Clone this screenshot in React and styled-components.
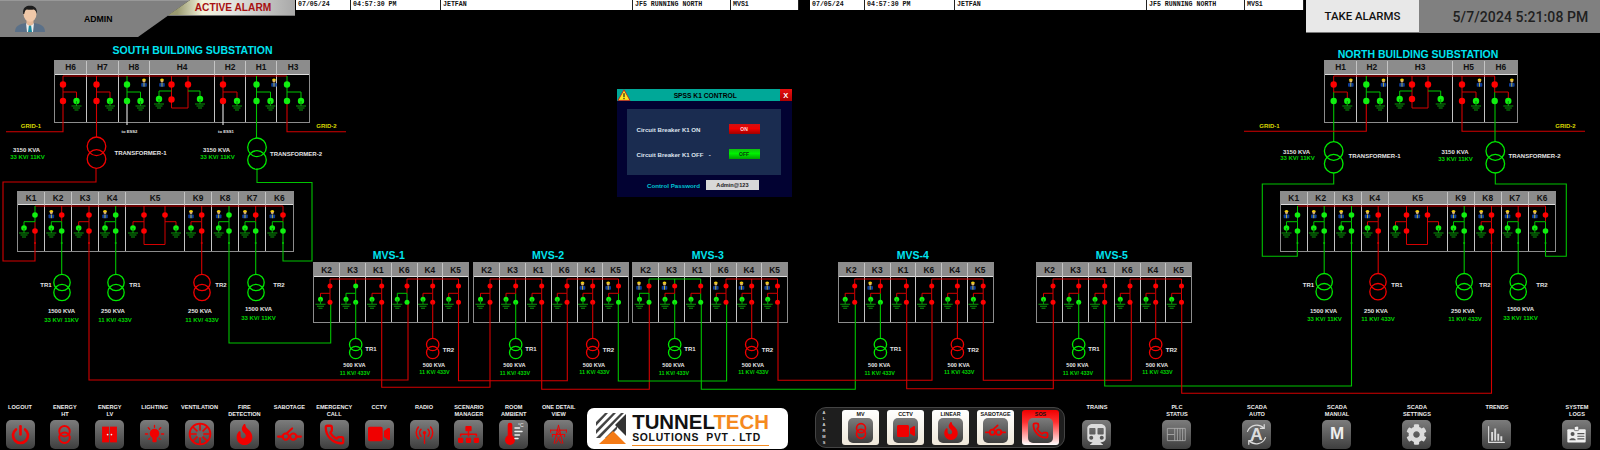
import React from "react";
import styled, { createGlobalStyle } from "styled-components";
import { FaFire, FaVideo, FaSitemap, FaCog, FaSubway } from "react-icons/fa";
import { Phone } from "lucide-react";

const RED = "#f00000";
const GREEN = "#00e800";
const WIRE_RED = "#d40000";
const WIRE_GREEN = "#00c400";
const CANVAS_TOP = 37;

const wireOf = (c) => (c === "g" ? WIRE_GREEN : WIRE_RED);

/* breaker rows, in page coordinates */
const HT = { bus: 76, top: 84.5, bottom: 101, branch: 92, earth: 101, r: 3.2, personDx: 3.5, personY: 82 };
const KP = { bus: 206, top: 215, bottom: 231, branch: 221.7, earth: 228, r: 2.8, personDx: 0, personY: 213.5, tick: 243 };
const MV = { bus: 279, top: 286, bottom: 302.3, branch: 293.3, earth: 299.3, r: 2.5, personDx: -0.5, personY: 285 };

const SOUTH_HT_COLS = [["H6", 32], ["H7", 31.5], ["H8", 31.5], ["H4", 65], ["H2", 31], ["H1", 31], ["H3", 32]];
const NORTH_HT_COLS = [["H1", 31.4], ["H2", 31.3], ["H3", 65], ["H5", 32], ["H6", 31.7]];
const K_COLS = [["K1", 27], ["K2", 27], ["K3", 27], ["K4", 27], ["K5", 59], ["K9", 27], ["K8", 27], ["K7", 27], ["K6", 26.7]];
const MVS_COLS = [["K2", 26], ["K3", 26], ["K1", 25.7], ["K6", 26], ["K4", 25.3], ["K5", 25]];

const SOUTH_HT = [
  [63, 76.5, "rrr"], [96.5, 110, "rrr"], [127, 140.5, "gggp"],
  [223, 237, "rrr"], [256.5, 270.5, "gggp"], [287, 301, "ggg"],
];
const NORTH_HT = [
  [1333.7, 1347.3, "rgrp"], [1366.3, 1380, "gggp"], [1462, 1476, "rrrp"], [1494.7, 1508.3, "rgrp"],
];
const K_POS = [[35, 24], [61.7, 51.3], [89, 78.7], [115.7, 105], [201.7, 191], [229, 218.7], [255.7, 245], [283, 272.3]];
const SOUTH_K = ["grg", "rggp", "rrr", "gggp", "rrrp", "gggp", "rggp", "rggp"];
const NORTH_K = ["gggp", "gggp", "gggp", "rrrp", "gggp", "rrrp", "rggp", "rggp"];

const MVS = [
  { name: "MVS-1", x: 314, cx: 388.7, cells: ["rrr", "ggg", "rrr", "rgg", "rrr", "rrr"], left: "r" },
  { name: "MVS-2", x: 474, cx: 548, cells: ["rrr", "rgr", "rrr", "rrr", "rrrp", "rgrp"], left: "r" },
  { name: "MVS-3", x: 633, cx: 707.7, cells: ["rggp", "rgrp", "rgr", "rrrp", "rrrp", "rrrp"], left: "g" },
  { name: "MVS-4", x: 838.7, cx: 912.7, cells: ["rrr", "rgrp", "rrr", "rrr", "rrr", "rrrp"], left: "r" },
  { name: "MVS-5", x: 1037, cx: 1111.7, cells: ["rrr", "rgr", "rrr", "rrr", "rrr", "rrr"], left: "r" },
];
const MVS_MAIN = [16, 41.7, 67.7, 93, 118.7, 144.5];
const MVS_EARTH = [6.5, 32, 58, 83.3, 109, 134.7];

const WIRES = [
  // south HT
  [WIRE_RED, "M63 101V131.7H6"],
  [WIRE_RED, "M96.5 101V137"],
  ["#e8e8e8", "M127 101V125"],
  ["#e8e8e8", "M223 101V125"],
  [WIRE_GREEN, "M256.5 101V138"],
  [WIRE_RED, "M287 101V131.7H346"],
  [WIRE_RED, "M96 168.3V182H3V261H35V231"],
  [WIRE_GREEN, "M257 168.3V182.5H312V261H283V231"],
  // south K
  [WIRE_GREEN, "M61.7 231V274.3"],
  [WIRE_RED, "M89 231V380H408V302.3"],
  [WIRE_GREEN, "M115.7 231V274.3"],
  [WIRE_RED, "M201.7 231V274.3"],
  [WIRE_GREEN, "M229 231V343H330.7V302.3"],
  [WIRE_GREEN, "M255.7 231V274.3"],
  // MVS ties
  [WIRE_RED, "M381.7 302V387.3H490V302"],
  [WIRE_RED, "M458.5 302V380.7H567.3V302"],
  [WIRE_RED, "M541.7 302V389.3H649.3V302"],
  [WIRE_GREEN, "M618.3 302V381H726.6V302"],
  [WIRE_GREEN, "M701.3 302V389.3H855.3V302"],
  [WIRE_RED, "M778 302V380.3H932V302"],
  [WIRE_RED, "M906.7 302V388.7H1053.3V302"],
  [WIRE_RED, "M983.3 302V380.3H1131.3V302"],
  // north HT
  [WIRE_GREEN, "M1333.7 101V141.7"],
  [WIRE_RED, "M1366.3 101V131.3H1244"],
  [WIRE_RED, "M1462 101V131.3H1585"],
  [WIRE_GREEN, "M1495 101V141.7"],
  [WIRE_GREEN, "M1333.7 173V184H1262.3V256.3H1297.3V231"],
  [WIRE_GREEN, "M1495.3 173V184H1566.3V256.3H1545.5V231"],
  // north K
  [WIRE_GREEN, "M1324.2 231V273.5"],
  [WIRE_GREEN, "M1351.5 231V386H1104.7V302.3"],
  [WIRE_RED, "M1378.2 231V273.5"],
  [WIRE_GREEN, "M1464.2 231V273.5"],
  [WIRE_RED, "M1491.5 231V393.3H1181.7V302.3"],
  [WIRE_GREEN, "M1518.2 231V273.5"],
];

const TRANSFORMERS = [
  [96.5, 137, 9.3, 12.7, RED], [257, 138, 9.3, 12.7, GREEN],
  [1333.7, 141.7, 9.3, 12.7, GREEN], [1495.3, 141.7, 9.3, 12.7, GREEN],
  [62, 274.3, 8.2, 10, GREEN], [116, 274.3, 8.2, 10, GREEN], [202, 274.3, 8.2, 10, RED], [256, 274.3, 8.2, 10, GREEN],
  [1324.2, 273.5, 8.2, 10, GREEN], [1378, 273.5, 8.2, 10, RED], [1464.2, 273.5, 8.2, 10, GREEN], [1518.2, 273.5, 8.2, 10, GREEN],
];

/* [text, center x, center y, colour kind] */
const LABELS = [
  ["GRID-1", 31, 126, "y"], ["GRID-2", 326.5, 126, "y"], ["GRID-1", 1269.5, 125.7, "y"], ["GRID-2", 1565.5, 125.7, "y"],
  ["3150 KVA", 26.5, 149.5], ["33 KV/ 11KV", 27.5, 156.5, "g"], ["TRANSFORMER-1", 140.5, 152.5],
  ["3150 KVA", 216.5, 149.5], ["33 KV/ 11KV", 217.5, 157.3, "g"], ["TRANSFORMER-2", 296, 153.7],
  ["3150 KVA", 1296.5, 151.5], ["33 KV/ 11KV", 1297.5, 158.3, "g"], ["TRANSFORMER-1", 1374.5, 156],
  ["3150 KVA", 1455, 151.5], ["33 KV/ 11KV", 1455.5, 159, "g"], ["TRANSFORMER-2", 1534.5, 156],
  ["TR1", 46, 285], ["TR1", 135, 285], ["TR2", 221, 285], ["TR2", 279, 285],
  ["1500 KVA", 61.5, 311], ["33 KV/ 11KV", 61.5, 319.5, "g"],
  ["250 KVA", 113, 311], ["11 KV/ 433V", 115, 319.5, "g"],
  ["250 KVA", 200, 311], ["11 KV/ 433V", 202, 319.5, "g"],
  ["1500 KVA", 258.5, 309], ["33 KV/ 11KV", 258.5, 318, "g"],
  ["TR1", 1308.5, 285], ["TR1", 1397, 285], ["TR2", 1485, 285], ["TR2", 1542, 285],
  ["1500 KVA", 1323.5, 310.7], ["33 KV/ 11KV", 1324.5, 319, "g"],
  ["250 KVA", 1376, 310.7], ["11 KV/ 433V", 1378, 319, "g"],
  ["250 KVA", 1463, 311], ["11 KV/ 433V", 1465, 319, "g"],
  ["1500 KVA", 1520.5, 308.7], ["33 KV/ 11KV", 1520.5, 317.5, "g"],
];

const Global = createGlobalStyle`
  html, body { margin: 0; padding: 0; background: #000; }
  body { overflow: hidden; font-family: "Liberation Sans", Arial, sans-serif; }
`;

const Page = styled.div`
  width: 1600px;
  height: 450px;
  display: flex;
  flex-direction: column;
  background: #000;
  overflow: hidden;
`;

/* top bar */
const TopBar = styled.div`
  height: ${CANVAS_TOP}px;
  flex: none;
  display: flex;
  align-items: flex-start;
`;

const AdminBlock = styled.div`
  width: 190px;
  height: 37px;
  flex: none;
  display: flex;
  align-items: center;
  padding-left: 14px;
  box-sizing: border-box;
  background: linear-gradient(#b0b0b0 0, #808080 1px);
  clip-path: polygon(0 0, 100% 0, 138px 100%, 0 100%);
`;

const AdminName = styled.span`
  margin-left: 38px;
  color: #000;
  font-size: 8.7px;
  font-weight: 700;
`;

const AlarmBanner = styled.div`
  width: 128px;
  height: 16px;
  margin-left: -23px;
  flex: none;
  padding-left: 4px;
  box-sizing: border-box;
  display: flex;
  align-items: center;
  justify-content: center;
  background: linear-gradient(90deg, #9a9a70 8%, #f4f4dc 28%, #e4e4e0 50%, #a8a8a8 100%);
  border-bottom: 1px solid #777;
  clip-path: polygon(23px 0, 100% 0, 100% 100%, 0 100%);
  color: #a81010;
  font-size: 10.2px;
  font-weight: 700;
`;

const AlarmRow = styled.div`
  width: ${(p) => p.$w}px;
  margin-left: ${(p) => p.$ml}px;
  height: 10px;
  flex: none;
  display: flex;
  background: #fff;
  color: #111;
  font-family: "Liberation Mono", monospace;
  font-size: 6.6px;
  font-weight: 700;
  line-height: 9px;
`;

const AlarmCell = styled.div`
  flex: ${(p) => (p.$w ? `0 0 ${p.$w}px` : 1)};
  padding-left: 2px;
  box-sizing: border-box;
  border-right: 1px solid #222;
  white-space: nowrap;
`;

const TakeAlarms = styled.button`
  margin-left: 2px;
  width: 113px;
  height: 33px;
  flex: none;
  padding: 0;
  border: none;
  border-bottom: 1px solid #777;
  background: #e8e8e8;
  color: #111;
  font-family: "Roboto", sans-serif;
  font-weight: 500;
  font-size: 11.4px;
`;

const Clock = styled.div`
  flex: 1;
  height: 33px;
  display: flex;
  align-items: center;
  justify-content: center;
  padding-left: 22px;
  background: #808080;
  color: #202020;
  font-family: "Roboto", sans-serif;
  font-weight: 500;
  font-size: 14px;
  letter-spacing: 0.1px;
`;

/* diagram canvas */
const Canvas = styled.div`
  flex: 1;
  position: relative;
`;

const Wiring = styled.svg`
  position: absolute;
  inset: 0;
  z-index: 1;
`;

const Panel = styled.div`
  position: absolute;
  left: ${(p) => p.$x}px;
  top: ${(p) => p.$y - CANVAS_TOP}px;
  height: ${(p) => p.$h}px;
  display: flex;
  box-sizing: content-box;
  outline: 1px solid #8c8c8c;
`;

const Cell = styled.div`
  flex: 0 0 ${(p) => p.$w}px;
  display: flex;
  flex-direction: column;
  box-sizing: border-box;
  border-right: 1.5px solid #c4c4c4;
  &:last-child { border-right: none; }
`;

const CellHead = styled.div`
  height: ${(p) => p.$h}px;
  flex: none;
  display: flex;
  align-items: center;
  justify-content: center;
  background: #8c8c8c;
  border-bottom: 1.5px solid #dedede;
  box-sizing: border-box;
  color: #111;
  font-size: 8.4px;
  font-weight: 700;
`;

const Title = styled.div`
  position: absolute;
  left: ${(p) => p.$x}px;
  top: ${(p) => p.$y - CANVAS_TOP}px;
  transform: translate(-50%, -50%);
  color: #00e4f0;
  font-size: 10.5px;
  font-weight: 700;
  white-space: nowrap;
  z-index: 2;
`;

const Tag = styled.div`
  position: absolute;
  left: ${(p) => p.$x}px;
  top: ${(p) => p.$y - CANVAS_TOP}px;
  transform: translate(-50%, -50%);
  color: ${(p) => (p.$kind === "g" ? "#00d800" : p.$kind === "y" ? "#d8d800" : "#e4e4e4")};
  font-size: ${(p) => p.$size || 6}px;
  font-weight: 700;
  white-space: nowrap;
  z-index: 2;
`;

/* control popup */
const Dialog = styled.div`
  position: absolute;
  left: 617px;
  top: 52px;
  width: 175px;
  height: 108px;
  display: flex;
  flex-direction: column;
  background: #020232;
  z-index: 3;
`;

const DialogBar = styled.div`
  height: 12px;
  flex: none;
  display: flex;
  align-items: center;
  background: #00a898;
`;

const DialogTitle = styled.div`
  flex: 1;
  text-align: center;
  color: #000;
  font-size: 6.7px;
  font-weight: 700;
`;

const CloseButton = styled.div`
  width: 12.5px;
  height: 12px;
  display: flex;
  align-items: center;
  justify-content: center;
  background: linear-gradient(#e81010, #b00000);
  color: #fff;
  font-size: 7.5px;
  font-weight: 700;
`;

const DialogBody = styled.div`
  margin: 7.5px 11.5px 0 9.5px;
  height: 66px;
  flex: none;
  display: flex;
  flex-direction: column;
  justify-content: center;
  gap: 15px;
  padding: 0 21px 0 10px;
  box-sizing: border-box;
  background: #1a2c50;
`;

const BreakerRow = styled.div`
  display: flex;
  align-items: center;
  justify-content: space-between;
  color: #dfe4ee;
  font-size: 6.1px;
  font-weight: 700;
`;

const BreakerButton = styled.div`
  width: 31px;
  height: 10px;
  display: flex;
  align-items: center;
  justify-content: center;
  background: ${(p) =>
    p.$on
      ? "linear-gradient(#d01010, #f00000 45%, #a00000)"
      : "linear-gradient(#10c010, #00f000 45%, #00a000)"};
  color: ${(p) => (p.$on ? "#ffd8d8" : "#0a3a0a")};
  font-size: 5px;
  font-weight: 700;
`;

const PasswordRow = styled.div`
  margin-top: 5.5px;
  padding-left: 30px;
  display: flex;
  align-items: center;
  gap: 6px;
  color: #00c4d4;
  font-size: 6.2px;
  font-weight: 700;
`;

const PasswordBox = styled.div`
  width: 53px;
  height: 10px;
  display: flex;
  align-items: center;
  justify-content: center;
  background: #d8d8d8;
  color: #222;
  font-size: 5.6px;
  font-weight: 700;
`;

/* bottom bar */
const BottomBar = styled.div`
  height: 47px;
  flex: none;
  display: flex;
  align-items: flex-start;
`;

const NavGroup = styled.div`
  display: flex;
  gap: ${(p) => p.$gap}px;
  margin-left: ${(p) => p.$ml || 0}px;
  flex: none;
`;

const NavItem = styled.div`
  width: ${(p) => p.$w}px;
  display: flex;
  flex-direction: column;
  align-items: center;
  padding-top: 1px;
`;

const NavLabel = styled.div`
  height: 15.7px;
  color: #eee;
  font-size: 5.6px;
  font-weight: 700;
  line-height: 7px;
  text-align: center;
  white-space: nowrap;
`;

const IconButton = styled.div`
  width: ${(p) => p.$size || 29}px;
  height: ${(p) => p.$size || 29}px;
  flex: none;
  display: flex;
  align-items: center;
  justify-content: center;
  border-radius: 5px;
  background: linear-gradient(#7c7c7c, #3e3e3e);
  color: ${(p) => (p.$light ? "#dcdcdc" : "#f00000")};
`;

const LetterIcon = styled.span`
  color: #eee;
  font-size: 17px;
  font-weight: 700;
`;

const LogoCard = styled.div`
  margin: 4.7px 0 0 8.5px;
  width: 200.5px;
  height: 41.7px;
  flex: none;
  display: flex;
  align-items: center;
  gap: 6px;
  padding-left: 9px;
  box-sizing: border-box;
  background: #fff;
  border-radius: 7px;
`;

const LogoText = styled.div`
  display: flex;
  flex-direction: column;
  color: #111;
  font-weight: 700;
`;

const LogoName = styled.div`
  font-size: 20.4px;
  line-height: 20px;
`;

const LogoAccent = styled.span`
  color: #f58a1f;
`;

const LogoSub = styled.div`
  font-size: 10.4px;
  line-height: 12px;
  letter-spacing: 0.7px;
  white-space: pre;
  border-bottom: 1px solid #f58a1f;
  padding-bottom: 1px;
`;

const AlarmGroup = styled.div`
  margin: 4px 0 0 27.3px;
  width: 250px;
  height: 41px;
  flex: none;
  display: flex;
  align-items: center;
  gap: 8.2px;
  padding-left: 5px;
  box-sizing: border-box;
  background: #1e1e1e;
  border: 1px solid #444;
  border-radius: 11px;
`;

const VerticalWord = styled.div`
  width: 6px;
  margin-right: 7px;
  color: #ddd;
  font-size: 4px;
  font-weight: 700;
  line-height: 6px;
  text-align: center;
`;

const AlarmCard = styled.div`
  width: 36.8px;
  height: 35.5px;
  display: flex;
  flex-direction: column;
  align-items: center;
  justify-content: space-between;
  padding: 1.5px 0 2px;
  box-sizing: border-box;
  border-radius: 3px;
  background: ${(p) =>
    p.$hot ? "linear-gradient(#f00000, #ff3030 35%, #fff 100%)" : "linear-gradient(#fff, #efe8da)"};
`;

const CardLabel = styled.div`
  color: #111;
  font-size: 5.4px;
  font-weight: 700;
  white-space: nowrap;
`;

/* drawings */
function Person({ x, y }) {
  return (
    <g>
      <rect x={x - 2.8} y={y + 0.9} width={5.6} height={3.8} rx={0.8} fill="#0c3c98" />
      <rect x={x - 0.4} y={y + 0.9} width={0.8} height={3.8} fill="#d8c830" />
      <circle cx={x} cy={y - 0.9} r={1.5} fill="#d8b078" />
      <path d={`M${x - 2} ${y - 1.4}a2 2 0 0 1 4 0z`} fill="#f0d010" />
    </g>
  );
}

function Ground({ x, y }) {
  const s = y + 5;
  return (
    <path
      d={`M${x} ${y}V${s}M${x - 5} ${s}H${x + 5}M${x - 3.5} ${s + 2}H${x + 3.5}M${x - 2} ${s + 4}H${x + 2}`}
      stroke="#089808"
      strokeWidth="1.1"
      fill="none"
    />
  );
}

function Dot({ x, y, r, c }) {
  return <circle cx={x} cy={y} r={r} fill={c === "g" ? "#10f010" : "#ff0000"} />;
}

function Feeder({ main, earth, status, geo }) {
  const [top, bottom, branch, person] = status;
  return (
    <g fill="none" strokeWidth="1">
      <path d={`M${main} ${geo.top}V${geo.branch}`} stroke={wireOf(top)} />
      <path d={`M${main} ${geo.branch}V${geo.bottom}`} stroke={wireOf(bottom)} />
      <path d={`M${main} ${geo.branch}H${earth}V${geo.earth}`} stroke={wireOf(branch)} />
      <Dot x={main} y={geo.top} r={geo.r} c={top} />
      <Dot x={main} y={geo.bottom} r={geo.r} c={bottom} />
      <Dot x={earth} y={geo.earth} r={geo.r} c="g" />
      <Ground x={earth} y={geo.earth} />
      {geo.tick && <circle cx={main} cy={geo.tick} r={1} fill={wireOf(bottom)} />}
      {person && <Person x={earth + geo.personDx} y={geo.personY} />}
    </g>
  );
}

function Coupler({ left, right, earthLeft, earthRight, branch, bottom, loop, branchY, earthY, geo }) {
  const stroke = wireOf(branch);
  return (
    <g fill="none" strokeWidth="1">
      <path d={`M${left} ${geo.bus}V${bottom}M${right} ${geo.bus}V${loop}H${left}V${bottom}`} stroke={WIRE_RED} />
      <path d={`M${left} ${branchY}H${earthLeft}V${earthY}M${right} ${branchY}H${earthRight}V${earthY}`} stroke={stroke} />
      <Dot x={left} y={geo.top} r={geo.r} c="r" />
      <Dot x={left} y={bottom} r={geo.r} c="r" />
      <Dot x={right} y={geo.top} r={geo.r} c="r" />
      <Dot x={earthLeft} y={earthY} r={geo.r} c="g" />
      <Dot x={earthRight} y={earthY} r={geo.r} c="g" />
      <Ground x={earthLeft} y={earthY} />
      <Ground x={earthRight} y={earthY} />
    </g>
  );
}

function Transformer({ x, top, r, gap, color }) {
  return (
    <g fill="none" stroke={color} strokeWidth="1.3">
      <circle cx={x} cy={top + r} r={r} />
      <circle cx={x} cy={top + r + gap} r={r} />
    </g>
  );
}

function WarningIcon() {
  return (
    <svg width="14" height="12" viewBox="0 0 14 12">
      <path d="M7 .8L13 11.4H1z" fill="#ffe820" stroke="#c02020" strokeWidth="0.9" />
      <rect x="6.4" y="4.2" width="1.2" height="4" fill="#222" />
      <rect x="6.4" y="9" width="1.2" height="1.2" fill="#222" />
    </svg>
  );
}

function Svg({ size = 21, children }) {
  return (
    <svg width={size} height={size} viewBox="0 0 24 24" fill="none" stroke="currentColor" strokeLinecap="round" strokeLinejoin="round">
      {children}
    </svg>
  );
}

const PowerIcon = ({ size }) => (
  <Svg size={size}>
    <path d="M12 2.5V12" strokeWidth="3" />
    <path d="M6.8 6.2a8.6 8.6 0 1 0 10.4 0" strokeWidth="3" />
  </Svg>
);
const CoilsIcon = ({ size }) => (
  <Svg size={size}>
    <circle cx="12" cy="8.2" r="6" strokeWidth="2.2" />
    <circle cx="12" cy="15.8" r="6" strokeWidth="2.2" />
  </Svg>
);
const DoorsIcon = ({ size }) => (
  <Svg size={size}>
    <rect x="3.5" y="3" width="8" height="18" fill="currentColor" stroke="none" />
    <rect x="12.5" y="3" width="8" height="18" fill="currentColor" stroke="none" />
    <circle cx="9.8" cy="12" r="1" fill="#eee" stroke="none" />
    <circle cx="14.2" cy="12" r="1" fill="#eee" stroke="none" />
  </Svg>
);
const BulbIcon = ({ size }) => (
  <Svg size={size}>
    <circle cx="12" cy="11" r="5" fill="currentColor" stroke="none" />
    <rect x="9.8" y="15" width="4.4" height="5" rx="1" fill="currentColor" stroke="none" />
    <path d="M12 2.5v2M5.5 5l1.5 1.5M18.5 5L17 6.5M2.5 11.5h2.2M19.3 11.5h2.2M6 17l1.3-1.2M18 17l-1.3-1.2" strokeWidth="1.4" />
  </Svg>
);
const FanIcon = ({ size }) => (
  <Svg size={size}>
    <circle cx="12" cy="12" r="10.4" strokeWidth="1.8" />
    <path d="M12 2v20M2 12h20M5 5l14 14M19 5L5 19" strokeWidth="1.7" />
    <circle cx="12" cy="12" r="3.4" fill="#666" stroke="none" />
  </Svg>
);
const SwitchIcon = ({ size }) => (
  <Svg size={size}>
    <path d="M1 14h4.4M18.6 14H23M9.5 10.8l5-4.6" strokeWidth="2" />
    <circle cx="8.4" cy="14" r="3" strokeWidth="2" />
    <circle cx="15.6" cy="14" r="3" strokeWidth="2" />
  </Svg>
);
const RadioIcon = ({ size }) => (
  <Svg size={size}>
    <circle cx="12" cy="10" r="2" fill="currentColor" stroke="none" />
    <path d="M12 11v11" strokeWidth="1.5" />
    <path d="M8 6a6 6 0 0 0 0 8M16 6a6 6 0 0 1 0 8" strokeWidth="1.7" />
    <path d="M5 3.5a10 10 0 0 0 0 13M19 3.5a10 10 0 0 1 0 13" strokeWidth="1.7" />
  </Svg>
);
const ThermoIcon = ({ size }) => (
  <Svg size={size}>
    <path d="M8 3v12.5" stroke="#f00000" strokeWidth="4.6" />
    <circle cx="8" cy="18" r="5" fill="#f00000" stroke="none" />
    <path d="M13 6h4.5M13 9.5h7M13 13h4.5M13 16.5h3" stroke="#eee" strokeWidth="1.5" />
    <text x="16" y="4.5" fontSize="5" fill="#eee" stroke="none" fontFamily="Liberation Sans">°C</text>
  </Svg>
);
const TowerIcon = ({ size }) => (
  <Svg size={size}>
    <path d="M12 1.5L7 22M12 1.5L17 22M3 7h18M5 12h14M10 7l4 5M14 7l-4 5M9 12l6 10M15 12L9 22M3 7v2.5M21 7v2.5M5 12v2.5M19 12v2.5" strokeWidth="1.1" />
  </Svg>
);
const PlcIcon = ({ size }) => (
  <Svg size={size}>
    <rect x="2" y="5" width="20" height="14" stroke="#aaa" strokeWidth="1" />
    <path d="M2 12h7M10 5v14M13 5v14M16 5v14M19 5v14" stroke="#aaa" strokeWidth="1" />
  </Svg>
);
const AutoIcon = ({ size }) => (
  <Svg size={size}>
    <path d="M3.4 9a9.4 9.4 0 0 1 15.6-3M20.6 15a9.4 9.4 0 0 1-15.6 3" strokeWidth="1.2" />
    <path d="M19.4 2.6V6.2h-3.6M4.6 21.4V17.8h3.6" strokeWidth="1.2" />
    <text x="12" y="17.6" textAnchor="middle" fontSize="16.5" fill="currentColor" stroke="none" fontWeight="700" fontFamily="Liberation Sans, sans-serif">A</text>
  </Svg>
);
const TrendsIcon = ({ size }) => (
  <Svg size={size}>
    <path d="M3 3v18h18" strokeWidth="1.2" />
    <path d="M7 9v10M10.5 5v14M14 11v8M17.5 14v5" strokeWidth="2.2" strokeLinecap="butt" />
  </Svg>
);
const LogsIcon = ({ size }) => (
  <Svg size={size}>
    <rect x="1.5" y="6" width="21" height="15" rx="1" fill="#eee" stroke="none" />
    <rect x="9.5" y="2.5" width="5" height="5" rx="1" fill="#eee" stroke="#555" strokeWidth="0.8" />
    <circle cx="7.5" cy="11.5" r="2.3" fill="#555" stroke="none" />
    <path d="M3.8 18.5c.4-3 7-3 7.4 0z" fill="#555" stroke="none" />
    <path d="M13.5 11h7M13.5 14h7M13.5 17h7" stroke="#555" strokeWidth="1.3" />
  </Svg>
);
const FlameIcon = ({ size = 21 }) => <FaFire size={size} />;
const VideoIcon = ({ size = 21 }) => <FaVideo size={size + 1} />;
const HandsetIcon = ({ size = 21 }) => <Phone size={size} strokeWidth={2.6} />;

function LogoMark() {
  return (
    <svg width="30" height="31" viewBox="0 0 30 31" style={{ flex: "none" }}>
      <path d="M0 9L9 0h3L0 13zM0 17L17 0h3L0 21zM0 25L25 0h3L4 25zM9 25L21 13v3L12 25z" fill="#444" />
      <path d="M30 1V23L19 12z" fill="#333" />
      <path d="M3 31L17 18 30 31z" fill="#f47b16" />
    </svg>
  );
}

const LEFT_NAV = [
  ["LOGOUT", <PowerIcon />],
  ["ENERGY\nHT", <CoilsIcon />],
  ["ENERGY\nLV", <DoorsIcon />],
  ["LIGHTING", <BulbIcon size={23} />],
  ["VENTILATION", <FanIcon size={24} />],
  ["FIRE\nDETECTION", <FlameIcon />],
  ["SABOTAGE", <SwitchIcon size={25} />],
  ["EMERGENCY\nCALL", <HandsetIcon />],
  ["CCTV", <VideoIcon />],
  ["RADIO", <RadioIcon />],
  ["SCENARIO\nMANAGER", <FaSitemap size={21} />],
  ["ROOM\nAMBIENT", <ThermoIcon size={24} />],
  ["ONE DETAIL\nVIEW", <TowerIcon />],
];

const RIGHT_NAV = [
  ["TRAINS", <FaSubway size={21} />],
  ["PLC\nSTATUS", <PlcIcon />],
  ["SCADA\nAUTO", <AutoIcon size={25} />],
  ["SCADA\nMANUAL", <LetterIcon>M</LetterIcon>],
  ["SCADA\nSETTINGS", <FaCog size={21} />],
  ["TRENDS", <TrendsIcon />],
  ["SYSTEM\nLOGS", <LogsIcon />],
];

const ALARM_CARDS = [
  ["MV", <CoilsIcon size={18} />],
  ["CCTV", <VideoIcon size={17} />],
  ["LINEAR", <FlameIcon size={18} />],
  ["SABOTAGE", <SwitchIcon size={21} />],
  ["SOS", <HandsetIcon size={17} />, true],
];

const ALARM_ROWS = [
  { ml: 1, w: 503, cells: ["07/05/24", "04:57:30 PM", "JETFAN", "JF5 RUNNING NORTH", "MVS1"] },
  { ml: 11, w: 494, cells: ["07/05/24", "04:57:30 PM", "JETFAN", "JF5 RUNNING NORTH", "MVS1"] },
];
const ALARM_WIDTHS = [55, 90, 192, 98];

function MultiLine({ text }) {
  return text.split("\n").map((line) => <div key={line}>{line}</div>);
}

function Nav({ items, gap, ml, width, light }) {
  return (
    <NavGroup $gap={gap} $ml={ml}>
      {items.map(([label, icon]) => (
        <NavItem key={label} $w={width}>
          <NavLabel><MultiLine text={label} /></NavLabel>
          <IconButton $light={light}>{icon}</IconButton>
        </NavItem>
      ))}
    </NavGroup>
  );
}

function SwitchPanel({ x, y, h, headH, cols }) {
  return (
    <Panel $x={x} $y={y} $h={h}>
      {cols.map(([name, w]) => (
        <Cell key={name} $w={w}>
          <CellHead $h={headH}>{name}</CellHead>
        </Cell>
      ))}
    </Panel>
  );
}

function Diagram() {
  return (
    <Canvas>
      <SwitchPanel x={55} y={61} h={61} headH={13.5} cols={SOUTH_HT_COLS} />
      <SwitchPanel x={1325.3} y={61} h={61} headH={13.5} cols={NORTH_HT_COLS} />
      <SwitchPanel x={18} y={192} h={59} headH={13} cols={K_COLS} />
      <SwitchPanel x={1280.7} y={192} h={59} headH={13} cols={K_COLS} />
      {MVS.map((m) => (
        <SwitchPanel key={m.name} x={m.x} y={263} h={59} headH={14} cols={MVS_COLS} />
      ))}

      <Wiring width="1600" height="366" viewBox={`0 ${CANVAS_TOP} 1600 366`}>
        {WIRES.map(([c, d]) => (
          <path key={d} d={d} stroke={c} strokeWidth="1.1" fill="none" />
        ))}

        {/* bus bars */}
        <path d="M63 76H287M1333.7 76H1494.7M35 206H283M1297.5 206H1545.5" stroke={WIRE_RED} strokeWidth="1.1" fill="none" />

        {SOUTH_HT.map(([main, earth, s]) => (
          <React.Fragment key={main}>
            <path d={`M${main} 76V84.5`} stroke={wireOf(s[0])} strokeWidth="1" fill="none" />
            <Feeder main={main} earth={earth} status={s} geo={HT} />
          </React.Fragment>
        ))}
        <Coupler left={171.5} right={188} earthLeft={159} earthRight={200} branch="g" bottom={99.5} loop={108} branchY={91} earthY={99} geo={HT} />
        <Person x={162} y={82} />

        {NORTH_HT.map(([main, earth, s]) => (
          <React.Fragment key={main}>
            <path d={`M${main} 76V84.5`} stroke={wireOf(s[0])} strokeWidth="1" fill="none" />
            <Feeder main={main} earth={earth} status={s} geo={HT} />
          </React.Fragment>
        ))}
        <Coupler left={1412} right={1428} earthLeft={1399.7} earthRight={1440.7} branch="g" bottom={99} loop={108} branchY={91} earthY={99} geo={HT} />
        <Person x={1402} y={82} />

        {K_POS.map(([main, earth], i) => (
          <React.Fragment key={main}>
            <path d={`M${main} 206V215`} stroke={wireOf(SOUTH_K[i][0])} strokeWidth="1" fill="none" />
            <Feeder main={main} earth={earth} status={SOUTH_K[i]} geo={KP} />
            <path d={`M${main + 1262.5} 206V215`} stroke={wireOf(NORTH_K[i][0])} strokeWidth="1" fill="none" />
            <Feeder main={main + 1262.5} earth={earth + 1262.5} status={NORTH_K[i]} geo={KP} />
          </React.Fragment>
        ))}
        <Coupler left={144} right={165} earthLeft={133} earthRight={176} branch="r" bottom={231} loop={244.5} branchY={221.7} earthY={228} geo={KP} />
        <Coupler left={1406.5} right={1427.5} earthLeft={1395.5} earthRight={1438.5} branch="r" bottom={231} loop={244.5} branchY={221.7} earthY={228} geo={KP} />
        <Person x={1417.3} y={213.5} />

        {MVS.map((m) => (
          <g key={m.name}>
            <path d={`M${m.x + 16} 279H${m.x + 67.7}`} stroke={wireOf(m.left)} strokeWidth="1.1" fill="none" />
            <path d={`M${m.x + 93} 279H${m.x + 144.5}`} stroke={WIRE_RED} strokeWidth="1.1" fill="none" />
            {m.cells.map((s, i) => (
              <React.Fragment key={i}>
                <path d={`M${m.x + MVS_MAIN[i]} 279V286`} stroke={wireOf(i < 3 ? m.left : "r")} strokeWidth="1" fill="none" />
                <Feeder main={m.x + MVS_MAIN[i]} earth={m.x + MVS_EARTH[i]} status={s} geo={MV} />
              </React.Fragment>
            ))}
            <path d={`M${m.x + 41.7} 302.3V338.3`} stroke={WIRE_GREEN} strokeWidth="1.1" fill="none" />
            <path d={`M${m.x + 118.7} 302.3V338.3`} stroke={WIRE_RED} strokeWidth="1.1" fill="none" />
            <Transformer x={m.x + 41.7} top={338.3} r={6.2} gap={8} color={GREEN} />
            <Transformer x={m.x + 118.7} top={338.3} r={6.2} gap={8} color={RED} />
          </g>
        ))}

        {TRANSFORMERS.map(([x, top, r, gap, color]) => (
          <Transformer key={`${x}-${top}`} x={x} top={top} r={r} gap={gap} color={color} />
        ))}
      </Wiring>

      <Title $x={192.5} $y={50}>SOUTH BUILDING SUBSTATION</Title>
      <Title $x={1418} $y={54}>NORTH BUILDING SUBSTATION</Title>
      {MVS.map((m) => (
        <React.Fragment key={m.name}>
          <Title $x={m.cx} $y={254.5}>{m.name}</Title>
          <Tag $x={m.x + 57} $y={348.7}>TR1</Tag>
          <Tag $x={m.x + 134.5} $y={350}>TR2</Tag>
          <Tag $x={m.x + 40.5} $y={365} $size={5.6}>500 KVA</Tag>
          <Tag $x={m.x + 41} $y={372.5} $kind="g" $size={5.4}>11 KV/ 433V</Tag>
          <Tag $x={m.x + 120} $y={364.7} $size={5.6}>500 KVA</Tag>
          <Tag $x={m.x + 120.5} $y={372} $kind="g" $size={5.4}>11 KV/ 433V</Tag>
        </React.Fragment>
      ))}
      {LABELS.map(([text, x, y, kind]) => (
        <Tag key={`${text}-${x}`} $x={x} $y={y} $kind={kind}>{text}</Tag>
      ))}
      <Tag $x={129.5} $y={131} $size={4.2}>to ESS2</Tag>
      <Tag $x={226} $y={131} $size={4.2}>to ESS1</Tag>

      <Dialog>
        <DialogBar>
          <WarningIcon />
          <DialogTitle>SPSS K1 CONTROL</DialogTitle>
          <CloseButton>X</CloseButton>
        </DialogBar>
        <DialogBody>
          <BreakerRow>
            <span>Circuit Breaker K1 ON</span>
            <BreakerButton $on>ON</BreakerButton>
          </BreakerRow>
          <BreakerRow>
            <span>Circuit Breaker K1 OFF &nbsp; -</span>
            <BreakerButton>OFF</BreakerButton>
          </BreakerRow>
        </DialogBody>
        <PasswordRow>
          <span>Control Password</span>
          <PasswordBox>Admin@123</PasswordBox>
        </PasswordRow>
      </Dialog>
    </Canvas>
  );
}

function AdminAvatar() {
  return (
    <svg width="32" height="27" viewBox="0 0 32 27">
      <path d="M1 27c0-6 4-8 11-9h8c7 1 11 3 11 9z" fill="#5a7088" />
      <path d="M12 18l4 3 4-3-1 9h-6z" fill="#f0f0f0" />
      <path d="M15 20h2l1 7h-4z" fill="#1c8ca0" />
      <path d="M12.5 14h7v5l-3.5 2-3.5-2z" fill="#e4b898" />
      <ellipse cx="16" cy="9" rx="6.5" ry="7.8" fill="#f0c8a8" />
      <path d="M9.2 9C8.4 2.5 12 .8 16 .8s7.6 1.7 6.8 8.2c-.6-3-1.8-4.4-3-4.6-2 .6-5 .6-7 0-1.4.4-2 1.6-2.6 4.6z" fill="#1c1c1c" />
    </svg>
  );
}

export default function App() {
  return (
    <Page>
      <Global />
      <TopBar>
        <AdminBlock>
          <AdminAvatar />
          <AdminName>ADMIN</AdminName>
        </AdminBlock>
        <AlarmBanner>ACTIVE ALARM</AlarmBanner>
        {ALARM_ROWS.map((row) => (
          <AlarmRow key={row.ml} $w={row.w} $ml={row.ml}>
            {row.cells.map((c, i) => (
              <AlarmCell key={c} $w={ALARM_WIDTHS[i]}>{c}</AlarmCell>
            ))}
          </AlarmRow>
        ))}
        <TakeAlarms>TAKE ALARMS</TakeAlarms>
        <Clock>5/7/2024 5:21:08 PM</Clock>
      </TopBar>

      <Diagram />

      <BottomBar>
        <Nav items={LEFT_NAV} gap={4.9} width={40} />
        <LogoCard>
          <LogoMark />
          <LogoText>
            <LogoName>TUNNEL<LogoAccent>TECH</LogoAccent></LogoName>
            <LogoSub>SOLUTIONS  PVT . LTD</LogoSub>
          </LogoText>
        </LogoCard>
        <AlarmGroup>
          <VerticalWord><MultiLine text={"A\nL\nA\nR\nM\nS"} /></VerticalWord>
          {ALARM_CARDS.map(([label, icon, hot]) => (
            <AlarmCard key={label} $hot={hot}>
              <CardLabel>{label}</CardLabel>
              <IconButton $size={25}>{icon}</IconButton>
            </AlarmCard>
          ))}
        </AlarmGroup>
        <Nav items={RIGHT_NAV} gap={34} ml={9} width={46} light />
      </BottomBar>
    </Page>
  );
}
